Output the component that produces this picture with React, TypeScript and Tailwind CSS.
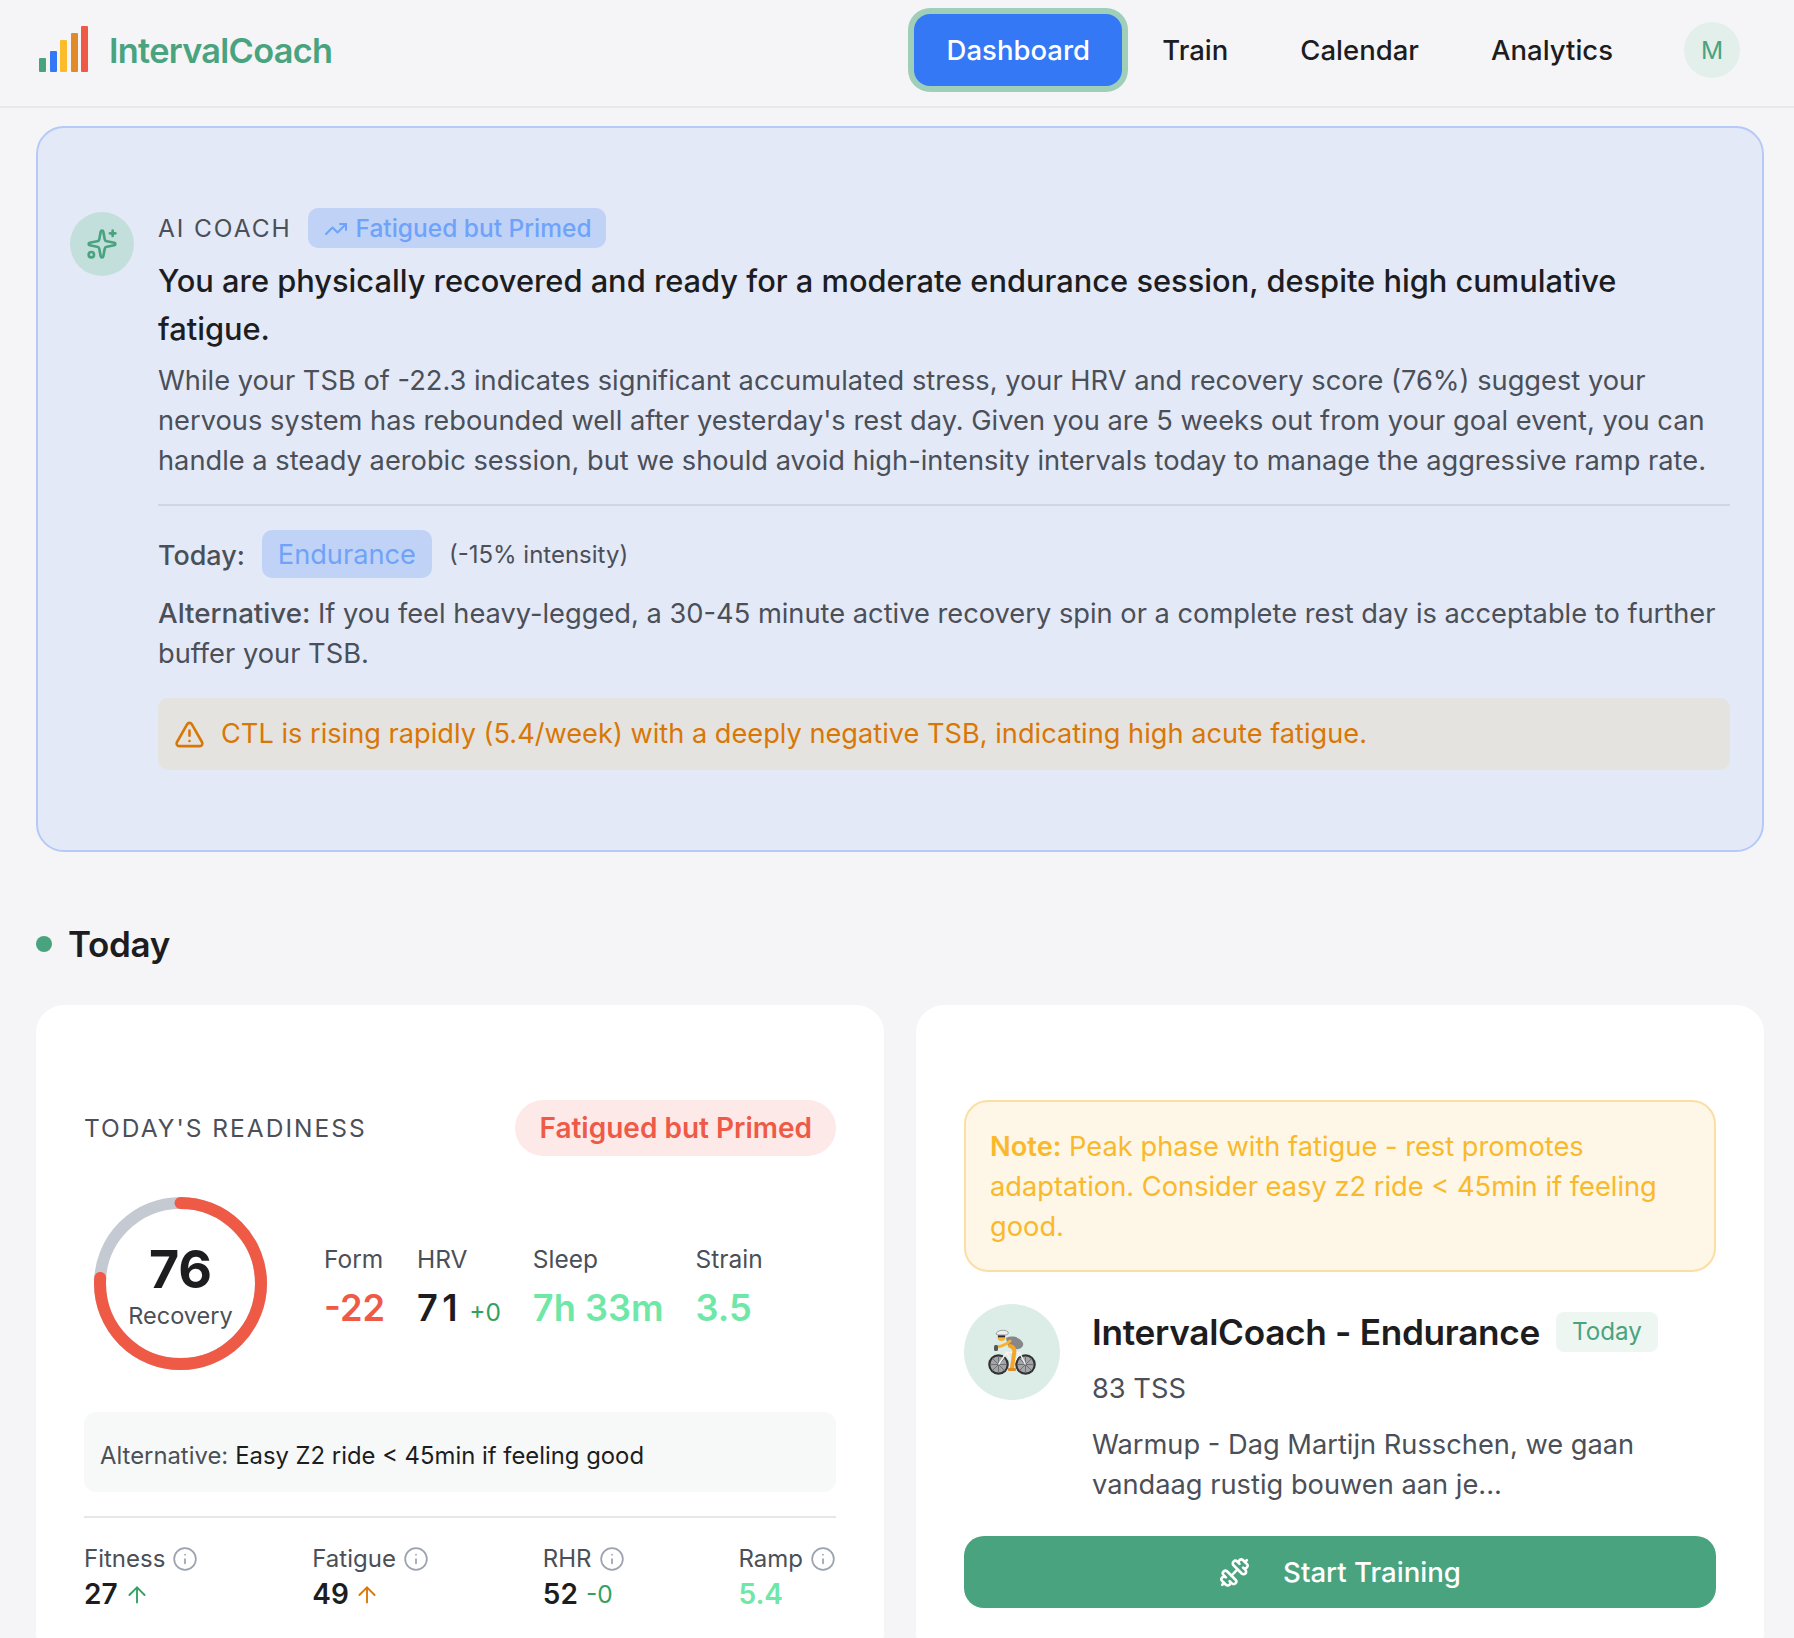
import React from 'react';
import { ArrowUp, Dumbbell, Info, Sparkles, TrendingUp, TriangleAlert } from 'lucide-react';

const logoBars = [
  { height: 'h-[14px]', color: 'bg-[#4aa37f]' },
  { height: 'h-[21px]', color: 'bg-[#3478f6]' },
  { height: 'h-[32px]', color: 'bg-[#fbbc2c]' },
  { height: 'h-[39px]', color: 'bg-[#e08a2a]' },
  { height: 'h-[46px]', color: 'bg-[#ef5a47]' },
];

function CyclistIcon() {
  return (
    <svg width="48" height="46" viewBox="0 0 48 46">
      {/* wielen */}
      <circle cx="10.5" cy="35.5" r="9.2" fill="#a3a5a8" stroke="#333335" strokeWidth="2.2" />
      <circle cx="37.5" cy="35.5" r="9.2" fill="#a3a5a8" stroke="#333335" strokeWidth="2.2" />
      <path d="M10.5 27v17M2 35.5h17M4.5 29.5l12 12M16.5 29.5l-12 12M37.5 27v17M29 35.5h17M31.5 29.5l12 12M43.5 29.5l-12 12" stroke="#6d6f73" strokeWidth="1" />
      {/* frame */}
      <path d="M10.5 35.5l8-12h13l6 12M18.5 23.5l7 12 6-12" stroke="#f4f5f5" strokeWidth="1.4" fill="none" />
      {/* lichaam */}
      <path d="M18 9c6-3 14-1 17 5 1 4-3 7-9 6l-6-3z" fill="#85878b" />
      <path d="M22 12c-3 3-7 5-13 6" stroke="#f9b233" strokeWidth="3" fill="none" strokeLinecap="round" />
      <path d="M22 17c4 1 5 4 4 8l-2 14" stroke="#f4a62a" strokeWidth="4" fill="none" strokeLinecap="round" />
      <rect x="6" y="16" width="4" height="6" rx="1.5" fill="#55575a" />
      <rect x="20" y="39" width="8" height="3" rx="1" fill="#e08a2a" />
      {/* hoofd */}
      <circle cx="13.5" cy="8" r="4" fill="#f9b233" />
      <path d="M8 5c1-4 9-5 12-2 1 2-1 3-3 3H10z" fill="#eceded" stroke="#6d6f73" strokeWidth="0.6" />
      <rect x="10" y="6.5" width="7" height="1.8" fill="#2c2c2e" />
    </svg>
  );
}

function RecoveryRing() {
  const radius = 80.5;
  const circumference = 2 * Math.PI * radius;
  return (
    <div className="relative w-[173px] h-[173px] shrink-0">
      <svg width="173" height="173" viewBox="0 0 173 173" className="-rotate-90">
        <circle cx="86.5" cy="86.5" r={radius} fill="none" stroke="#c5c9d2" strokeWidth="12" />
        <circle
          cx="86.5"
          cy="86.5"
          r={radius}
          fill="none"
          stroke="#ef5a47"
          strokeWidth="12"
          strokeLinecap="round"
          strokeDasharray={`${circumference * 0.76} ${circumference}`}
        />
      </svg>
      <div className="absolute inset-0 pt-[7px] flex flex-col items-center justify-center">
        <span className="text-[52px] leading-[56px] font-bold text-[#1d1d1f]">76</span>
        <span className="text-[23.5px] leading-[35px] text-[#4b4f57]">Recovery</span>
      </div>
    </div>
  );
}

function Stat({ label, value, color, extra }: { label: string; value: string; color: string; extra?: string }) {
  return (
    <div className="flex flex-col">
      <span className="text-[24.5px] leading-[35px] text-[#4b4f57]">{label}</span>
      <span className={`text-[36.2px] leading-[49px] font-semibold mt-[7px] ${color}`}>
        <span className={extra ? 'tracking-[4.5px]' : ''}>{value}</span>
        {extra && <span className="text-[24.5px] font-normal text-[#34a060] ml-[7px]">{extra}</span>}
      </span>
    </div>
  );
}

function SmallStat({ label, children }: { label: string; children: React.ReactNode }) {
  return (
    <div className="flex flex-col">
      <span className="flex items-center gap-[7px] text-[24px] leading-[35px] text-[#4b4f57]">
        {label}
        <Info className="w-[26px] h-[26px] text-[#9ca3af]" strokeWidth={1.6} />
      </span>
      <span className="flex items-center pt-[1px] text-[28px] leading-[35px] font-semibold text-[#1d1d1f]">{children}</span>
    </div>
  );
}

export default function App() {
  return (
    <div className="h-screen overflow-hidden bg-[#f5f5f8] font-['Inter',sans-serif] text-[#1d1d1f]">
      <header className="h-[108px] pb-[6px] border-b-2 border-[#e8e8ea] flex items-center justify-between pl-[39px] pr-[54px]">
        <div className="flex items-center gap-[21px]">
          <div className="flex items-end gap-[3.5px] h-[46px] mb-[3px]">
            {logoBars.map((bar, i) => (
              <div key={i} className={`w-[7px] rounded-[1px] ${bar.height} ${bar.color}`} />
            ))}
          </div>
          <span className="pt-[2px] text-[34.3px] font-semibold tracking-[-0.7px] text-[#4aa37f]">IntervalCoach</span>
        </div>
        <nav className="flex items-center">
          <button className="h-[72px] w-[208px] pt-[2px] rounded-[16px] bg-[#3478f6] ring-[6px] ring-[#9fcfb9] text-white text-[27.5px] font-medium">
            Dashboard
          </button>
          <a className="pt-[2px] text-[27.5px] font-medium ml-[40px]">Train</a>
          <a className="pt-[2px] text-[27.5px] font-medium ml-[72px]">Calendar</a>
          <a className="pt-[2px] text-[27.5px] font-medium ml-[72px]">Analytics</a>
          <div className="ml-[71px] w-[56px] h-[56px] pt-[1px] rounded-full bg-[#e3efea] text-[#4aa37f] text-[24.5px] flex items-center justify-center">
            M
          </div>
        </nav>
      </header>

      <main className="pl-[36px] pr-[30px]">
        <section className="mt-[18px] h-[726px] rounded-[28px] border-2 border-[#b5caf7] bg-[#e3e9f7] pl-[32px] pr-[32px] pt-[80px] flex gap-[24px]">
          <div className="w-[64px] h-[64px] mt-[4px] rounded-full bg-[#c3dfdb] flex items-center justify-center shrink-0">
            <Sparkles className="w-[32px] h-[32px] text-[#4aa37f]" strokeWidth={2} />
          </div>
          <div className="flex-1 min-w-0">
            <div className="flex items-center gap-[16px]">
              <span className="pt-[1px] text-[24.5px] tracking-[1.9px] text-[#4b4f57]">AI COACH</span>
              <span className="h-[40px] pt-[1px] pl-[16px] pr-[14px] rounded-[10px] bg-[#c0d2f6] text-[#6fa3fa] text-[24.5px] font-medium flex items-center gap-[8px]">
                <TrendingUp className="w-[24px] h-[24px]" strokeWidth={2} />
                Fatigued but Primed
              </span>
            </div>
            <h2 className="mt-[9px] text-[30.8px] leading-[48px] font-medium text-[#1d1d1f]">
              You are physically recovered and ready for a moderate endurance session, despite high cumulative fatigue.
            </h2>
            <p className="mt-[8px] text-[27.25px] leading-[40px] text-[#4b4f57]">
              While your TSB of -22.3 indicates significant accumulated stress, your HRV and recovery score (76%) suggest your nervous system has rebounded well after yesterday's rest day. Given you are 5 weeks out from your goal event, you can handle a steady aerobic session, but we should avoid high-intensity intervals today to manage the aggressive ramp rate.
            </p>
            <div className="mt-[23px] border-t-2 border-[#cfd6e6] pt-[24px] flex items-center">
              <span className="pt-[2px] text-[26.9px] font-medium text-[#4b4f57]">Today:</span>
              <span className="ml-[17px] h-[48px] pt-[2px] px-[16px] rounded-[10px] bg-[#c0d2f6] text-[#6fa3fa] text-[27.2px] flex items-center">
                Endurance
              </span>
              <span className="ml-[17px] pt-[2px] text-[24px] text-[#4b4f57]">(-15% intensity)</span>
            </div>
            <p className="mt-[16px] text-[27.25px] leading-[40px] text-[#4b4f57]">
              <span className="text-[27.7px] leading-none font-medium">Alternative:</span> If you feel heavy-legged, a 30-45 minute active recovery spin or a complete rest day is acceptable to further buffer your TSB.
            </p>
            <div className="mt-[24px] h-[72px] rounded-[10px] bg-[#e4e3df] pl-[16px] flex items-center gap-[16px] text-[#d97706] text-[27.2px]">
              <TriangleAlert className="w-[31px] h-[31px]" strokeWidth={2} />
              <span className="pt-[1px]">CTL is rising rapidly (5.4/week) with a deeply negative TSB, indicating high acute fatigue.</span>
            </div>
          </div>
        </section>

        <div className="mt-[68px] flex items-center gap-[16px] h-[48px]">
          <div className="w-[16px] h-[16px] rounded-full bg-[#4aa37f]" />
          <h2 className="text-[35px] font-semibold tracking-[-0.3px]">Today</h2>
        </div>

        <div className="mt-[37px] grid grid-cols-2 gap-[32px]">
          <div className="bg-white rounded-[28px] px-[48px] pt-[95px] pb-[48px]">
            <div className="flex items-center justify-between h-[56px]">
              <span className="text-[24.5px] tracking-[2px] text-[#4b4f57]">TODAY'S READINESS</span>
              <span className="h-[56px] px-[24px] rounded-full bg-[#fde9e7] text-[#ef5a47] text-[28px] font-semibold flex items-center">
                Fatigued but Primed
              </span>
            </div>
            <div className="mt-[41px] ml-[10px] flex items-center gap-[57px]">
              <RecoveryRing />
              <div className="flex gap-[32px] mt-[11px]">
                <Stat label="Form" value="-22" color="text-[#ef5a47]" />
                <Stat label="HRV" value="71" color="text-[#1d1d1f]" extra="+0" />
                <Stat label="Sleep" value="7h 33m" color="text-[#6ee7a7]" />
                <Stat label="Strain" value="3.5" color="text-[#6ee7a7]" />
              </div>
            </div>
            <div className="mt-[42px] h-[80px] pt-[7px] rounded-[12px] bg-[#f7f9f8] pl-[16px] flex items-center text-[23.85px]">
              <span className="text-[#4b4f57]">Alternative:</span>
              <span className="ml-[7px] text-[#1d1d1f]">Easy Z2 ride &lt; 45min if feeling good</span>
            </div>
            <div className="mt-[24px] border-t-2 border-[#e5e7eb] pt-[23px] flex justify-between">
              <SmallStat label="Fitness">
                27
                <ArrowUp className="w-[26px] h-[26px] ml-[6px] text-[#34a060]" strokeWidth={1.75} />
              </SmallStat>
              <SmallStat label="Fatigue">
                49
                <ArrowUp className="w-[26px] h-[26px] ml-[5px] text-[#d97706]" strokeWidth={1.75} />
              </SmallStat>
              <SmallStat label="RHR">
                52
                <span className="ml-[8px] text-[24.5px] font-normal text-[#34a060]">-0</span>
              </SmallStat>
              <SmallStat label="Ramp">
                <span className="text-[#6ee7a7]">5.4</span>
              </SmallStat>
            </div>
          </div>

          <div className="bg-white rounded-[28px] px-[48px] pt-[95px] pb-[48px]">
            <div className="h-[172px] rounded-[24px] border-2 border-[#fadfa5] bg-[#fef6e7] px-[24px] pt-[25px] text-[27.25px] leading-[40px] text-[#f9b92b]">
              <span className="font-semibold">Note:</span> Peak phase with fatigue - rest promotes adaptation. Consider easy z2 ride &lt; 45min if feeling good.
            </div>
            <div className="mt-[32px] flex items-start gap-[32px]">
              <div className="w-[96px] h-[96px] rounded-full bg-[#dbede6] flex items-center justify-center shrink-0">
                <CyclistIcon />
              </div>
              <div className="min-w-0 pt-[4px]">
                <div className="flex items-center gap-[16px] h-[48px]">
                  <h3 className="text-[35.2px] font-semibold tracking-[-0.3px] text-[#1d1d1f]">IntervalCoach - Endurance</h3>
                  <span className="h-[40px] px-[16px] rounded-[8px] bg-[#eef6f2] text-[#4aa37f] text-[24.2px] flex items-center">Today</span>
                </div>
                <div className="mt-[13px] text-[27.25px] leading-[40px] text-[#4b4f57]">83 TSS</div>
                <p className="mt-[16px] text-[27.25px] leading-[40px] text-[#4b4f57]">
                  Warmup - Dag Martijn Russchen, we gaan vandaag rustig bouwen aan je...
                </p>
              </div>
            </div>
            <button className="mt-[31px] w-full h-[72px] rounded-[20px] bg-[#4aa37f] text-white text-[27.6px] font-medium flex items-center justify-center gap-[33px]">
              <Dumbbell className="w-[31px] h-[31px]" strokeWidth={2} />
              <span className="pt-[1px]">Start Training</span>
            </button>
          </div>
        </div>
      </main>
    </div>
  );
}
